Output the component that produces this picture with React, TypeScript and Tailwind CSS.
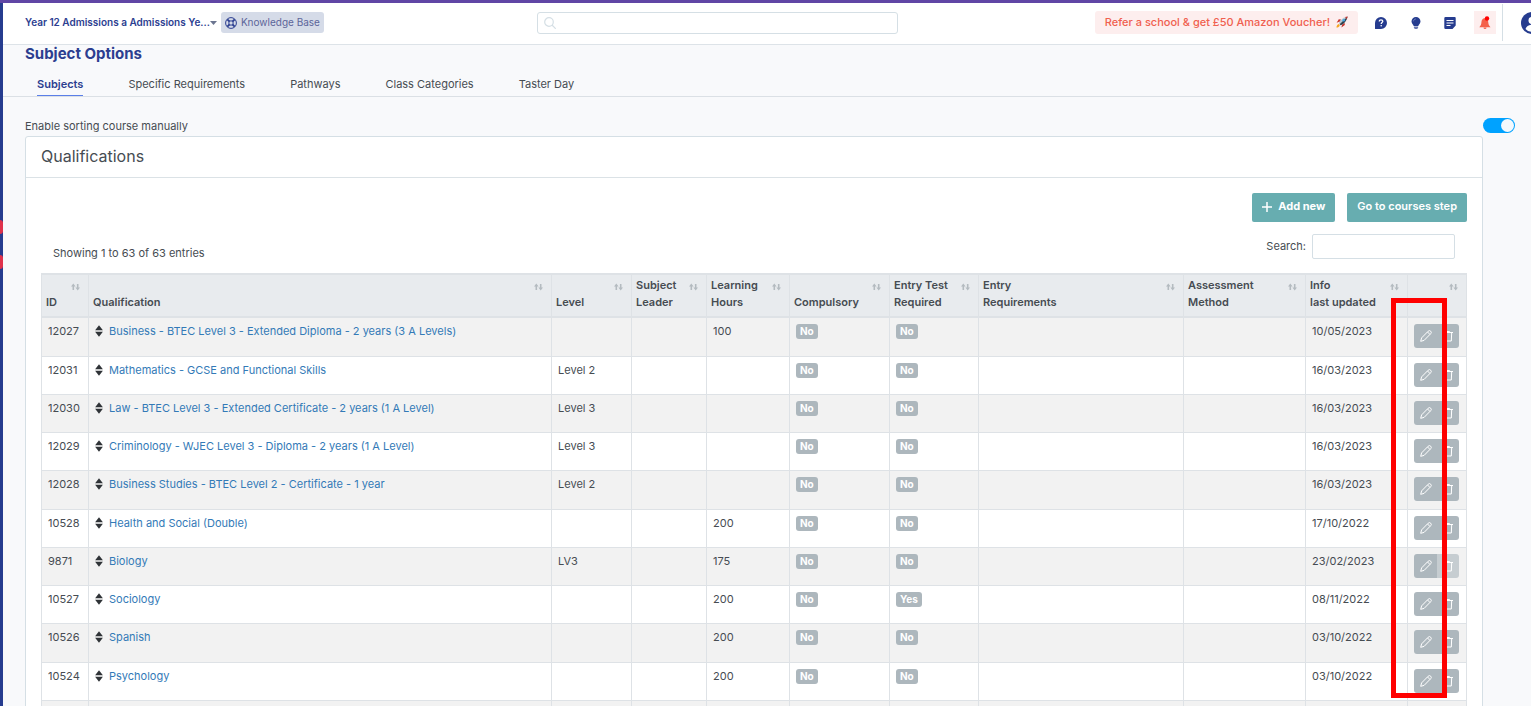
import type { ReactNode } from "react";
import clsx from "clsx";

type Qualification = {
  id: string;
  name: string;
  level?: string;
  hours?: string;
  entryTest?: boolean;
  updated: string;
  locked?: boolean;
};

const qualifications: Qualification[] = [
  { id: "12027", name: "Business - BTEC Level 3 - Extended Diploma - 2 years (3 A Levels)", hours: "100", updated: "10/05/2023" },
  { id: "12031", name: "Mathematics - GCSE and Functional Skills", level: "Level 2", updated: "16/03/2023" },
  { id: "12030", name: "Law - BTEC Level 3 - Extended Certificate - 2 years (1 A Level)", level: "Level 3", updated: "16/03/2023" },
  { id: "12029", name: "Criminology - WJEC Level 3 - Diploma - 2 years (1 A Level)", level: "Level 3", updated: "16/03/2023" },
  { id: "12028", name: "Business Studies - BTEC Level 2 - Certificate - 1 year", level: "Level 2", updated: "16/03/2023" },
  { id: "10528", name: "Health and Social (Double)", hours: "200", updated: "17/10/2022" },
  { id: "9871", name: "Biology", level: "LV3", hours: "175", updated: "23/02/2023", locked: true },
  { id: "10527", name: "Sociology", hours: "200", entryTest: true, updated: "08/11/2022" },
  { id: "10526", name: "Spanish", hours: "200", updated: "03/10/2022" },
  { id: "10524", name: "Psychology", hours: "200", updated: "03/10/2022" },
];

const columns = [
  { lines: ["ID"], width: "w-[47px]" },
  { lines: ["Qualification"], width: "" },
  { lines: ["Level"], width: "w-[80px]" },
  { lines: ["Subject", "Leader"], width: "w-[75px]" },
  { lines: ["Learning", "Hours"], width: "w-[83px]" },
  { lines: ["Compulsory"], width: "w-[100px]" },
  { lines: ["Entry Test", "Required"], width: "w-[89px]" },
  { lines: ["Entry", "Requirements"], width: "w-[205px]" },
  { lines: ["Assessment", "Method"], width: "w-[122px]" },
  { lines: ["Info", "last updated"], width: "w-[102px]" },
  { lines: [], width: "w-[59px]" },
];

const tabs = ["Subjects", "Specific Requirements", "Pathways", "Class Categories", "Taster Day"];

function SortIcon() {
  return (
    <svg viewBox="0 0 9 8" className="h-2 w-[9px]" fill="#b4bbc0">
      <path d="M2.300.5 4.600 3.500H3.100V7H1.500V3.500H0z" />
      <path d="M6.700 7.500 4.400 4.500H5.900V1h1.600v3.500H9z" />
    </svg>
  );
}

function DragIcon() {
  return (
    <svg viewBox="0 0 8 12" className="h-3 w-2 shrink-0" fill="#2f3337">
      <path d="M4 .3 7.900 5.200H.1z" />
      <path d="M4 11.700 7.900 6.800H.1z" />
    </svg>
  );
}

function PlusIcon() {
  return (
    <svg viewBox="0 0 10 10" className="size-[10px]" fill="none" stroke="#fff" strokeWidth="1.500">
      <path d="M5 0v10M0 5h10" />
    </svg>
  );
}

function PencilIcon() {
  return (
    <svg viewBox="0 0 12 12" className="size-3" fill="none" stroke="#fff" strokeLinejoin="round">
      <path d="M.7 11.300 1.600 7.900 8.200 1.200a1.700 1.700 0 0 1 2.500 2.500L4.100 10.400z" />
      <path d="m7.500 2 2.400 2.400M9.400 2.600l.1-.1" />
    </svg>
  );
}

function TrashIcon() {
  return (
    <svg viewBox="0 0 12 12" className="size-3" fill="none" stroke="#fff">
      <path d="M1.500 2.500h9.500M4.500 2.500v-1h3v1M2.700 2.500l.3 8.500h6.300l.4-8.500" />
    </svg>
  );
}

function LifeRingIcon() {
  return (
    <svg viewBox="0 0 12 12" className="size-3" fill="none" stroke="#2c3e90">
      <circle cx="6" cy="6" r="5.400" />
      <circle cx="6" cy="6" r="2.200" />
      <path d="m2.300 2.300 2.200 2.200M9.700 2.300 7.500 4.500M2.300 9.700l2.200-2.200M9.700 9.700 7.500 7.500" strokeWidth="1.800" />
    </svg>
  );
}

function RocketIcon() {
  return (
    <svg viewBox="0 0 12 12" className="size-3">
      <path d="M4 5.600.6 6.800l2.200-3.600L5 3.400zM6.300 8l-.9 3.400 3.400-2.400-.1-2z" fill="#c8352d" />
      <path d="M.4 11.600c.2-1.800.9-3.100 2.400-3.500l1 1.100c-.4 1.500-1.600 2.200-3.400 2.400z" fill="#f5a623" />
      <path d="M2.800 7.300C4.300 3.900 7 1.300 11.600.4c-.9 4.600-3.500 7.300-6.900 8.800z" fill="#b7c6d0" />
      <path d="M4.700 9.200C8.100 7.700 10.700 5 11.600.4L3.700 8.200z" fill="#33424d" />
      <path d="M9 1.100 11.600.4l-.7 2.600z" fill="#c8352d" />
      <circle cx="7.700" cy="4.300" r="1.200" fill="#3fa9e8" />
    </svg>
  );
}

function HelpIcon() {
  return (
    <svg viewBox="0 0 12 12" className="size-3">
      <path d="M6 0a6 6 0 1 1 0 12H.6a.6.6 0 0 1-.6-.6V6a6 6 0 0 1 6-6z" fill="#263c8f" />
      <path d="M4.300 4.600C4.300 3.400 5 2.800 6 2.800s1.800.6 1.800 1.500C7.800 5.500 6.200 5.600 6.200 7" fill="none" stroke="#fff" strokeWidth="1.300" />
      <circle cx="6.200" cy="8.800" r=".8" fill="#fff" />
    </svg>
  );
}

function BulbIcon() {
  return (
    <svg viewBox="0 0 10 12" className="h-3 w-[10px]" fill="#263c8f">
      <path d="M5 0a4.500 4.500 0 0 1 4.500 4.400C9.500 6.400 7.600 7.200 7.300 9H2.700C2.400 7.200.5 6.400.5 4.400A4.500 4.500 0 0 1 5 0z" />
      <path d="M2.900 9.500h4.200v1.300L6.200 12H3.800l-.9-1.200z" opacity=".7" />
      <path d="M2.500 4.300C2.600 3 3.500 2 4.900 1.900" fill="none" stroke="#7d8bc0" strokeWidth=".8" />
    </svg>
  );
}

function NoteIcon() {
  return (
    <svg viewBox="0 0 12 12" className="size-3">
      <path d="M1.500 0h9.300a.9.900 0 0 1 .9.900V8.500L8.500 12h-7A1.200 1.200 0 0 1 .3 10.800V1.200A1.200 1.200 0 0 1 1.500 0z" fill="#263c8f" />
      <path d="M2.500 3.500h7M2.500 6h7M2.500 8.500h4" stroke="#fff" />
    </svg>
  );
}

function BellIcon() {
  return (
    <svg viewBox="0 0 12 14" className="h-[14px] w-3">
      <path d="M5.600 2.300C8 2.300 9.200 4 9.300 6.500c.1 2 .7 3 2.200 4.700H.3c1.500-1.700 2-2.700 2.100-4.700C2.500 4 3.600 2.300 5.600 2.300z" fill="#f4614b" />
      <path d="M4.500 11.600h3a1.500 1.500 0 0 1-3 0z" fill="#f4614b" />
      <circle cx="8" cy="2.500" r="2.200" fill="#f00" />
    </svg>
  );
}

function AvatarIcon() {
  return (
    <svg viewBox="0 0 22 22" className="size-[22px]">
      <circle cx="11" cy="11" r="11" fill="#263c8f" />
      <circle cx="11" cy="8.500" r="3.500" fill="#fff" />
      <path d="M4.500 17c1-3 3.500-4.200 6.500-4.200s5.500 1.200 6.500 4.200a9 9 0 0 1-13 0z" fill="#fff" />
    </svg>
  );
}

function YesNo({ value }: { value?: boolean }) {
  return (
    <span className="inline-block rounded-[3px] bg-[#adb7bd] px-1 text-[10px] leading-[15px] font-bold text-white">
      {value ? "Yes" : "No"}
    </span>
  );
}

function Cell({ children, className }: { children?: ReactNode; className?: string }) {
  return (
    <td className={clsx("border-r border-b border-[#dee2e6] px-[6px] align-top leading-[17px]", className ?? "pt-[5px]")}>
      {children}
    </td>
  );
}

function Header() {
  return (
    <header className="flex h-[42px] items-center border-b border-[#dde3e8] bg-white pb-[2px] pl-[22px]">
      <div className="flex w-[34%] items-center">
        <button className="flex items-center text-[10px] font-semibold text-[#2c3e90]">
          Year 12 Admissions a Admissions Ye...
          <svg viewBox="0 0 7 4" className="h-1 w-[7px]" fill="#6b7590">
            <path d="M0 0h7L3.500 4z" />
          </svg>
        </button>
        <a href="#" className="ml-1 flex h-[21px] items-center gap-1 rounded-[3px] bg-[#d5dbe8] px-1 text-[10px] text-[#5c659a]">
          <LifeRingIcon />
          Knowledge Base
        </a>
      </div>

      <label className="flex h-[22px] w-[361px] items-center rounded-[3px] border border-[#d5dfe5] px-[6px]">
        <svg viewBox="0 0 12 12" className="size-3" fill="none" stroke="#d5dfe5" strokeWidth="1.200">
          <circle cx="5" cy="5" r="4.300" />
          <path d="m8 8 3.800 3.800" />
        </svg>
        <input aria-label="Search" className="min-w-0 flex-1 outline-none" />
      </label>

      <div className="flex flex-1 items-center justify-end">
        <a href="#" className="flex h-[23px] items-center gap-[6px] rounded-[3px] bg-[#fdeeee] px-[10px] pb-px text-[11px] font-medium text-[#f0604f]">
          Refer a school &amp; get £50 Amazon Voucher!
          <RocketIcon />
        </a>
        <button aria-label="Help" className="ml-[17px]"><HelpIcon /></button>
        <button aria-label="Tips" className="ml-6"><BulbIcon /></button>
        <button aria-label="Notes" className="ml-[23px]"><NoteIcon /></button>
        <button aria-label="Notifications" className="ml-[18px] flex h-[23px] w-[22px] items-center justify-center bg-[#fdeeee]">
          <BellIcon />
        </button>
        <div className="ml-[6px] flex h-[37px] w-[29px] items-center overflow-hidden border-l border-[#d5dfe5] pl-[18px]">
          <button aria-label="Account" className="shrink-0"><AvatarIcon /></button>
        </div>
      </div>
    </header>
  );
}

function QualificationsTable() {
  return (
    <div className="relative mt-[11px]">
      <table className="w-full table-fixed border-separate border-spacing-0 border-l border-[#dee2e6]">
        <thead>
          <tr className="h-[45px] bg-[#e8ebee]">
            {columns.map(({ lines, width }, i) => (
              <th
                key={i}
                className={clsx("border-y-2 border-r border-[#dee2e6] px-1 pb-[5px] text-left align-bottom font-semibold text-[#464c52]", width)}
              >
                <div className="flex h-[34px] justify-between leading-[17px]">
                  <span className="self-end whitespace-nowrap">
                    {lines.map((line) => (
                      <span key={line} className="block">{line}</span>
                    ))}
                  </span>
                  <button aria-label="Sort" className="mt-[6px] mr-1 self-start"><SortIcon /></button>
                </div>
              </th>
            ))}
          </tr>
        </thead>
        <tbody>
          {qualifications.map((q) => (
            <tr key={q.id} className="h-[38px] odd:bg-[#f2f2f2] nth-[4n+1]:h-[39px]">
              <Cell>{q.id}</Cell>
              <Cell>
                <div className="flex items-start gap-[6px]">
                  <span className="pt-[2px]"><DragIcon /></span>
                  <a href="#" className="text-[#337ab7]">{q.name}</a>
                </div>
              </Cell>
              <Cell>{q.level}</Cell>
              <Cell />
              <Cell>{q.hours}</Cell>
              <Cell><YesNo /></Cell>
              <Cell><YesNo value={q.entryTest} /></Cell>
              <Cell />
              <Cell />
              <Cell>{q.updated}</Cell>
              <Cell className="pt-[6px]">
                <div className="flex h-6 w-[45px] overflow-hidden rounded-[3px]">
                  <button aria-label="Edit" className="flex w-[23px] items-center justify-center bg-[#adb7bd]"><PencilIcon /></button>
                  <button
                    aria-label="Delete"
                    disabled={q.locked}
                    className="flex w-[22px] items-center justify-center bg-[#adb7bd] disabled:bg-[#c6cdd1]"
                  >
                    <TrashIcon />
                  </button>
                </div>
              </Cell>
            </tr>
          ))}
          <tr className="h-[38px] odd:bg-[#f2f2f2]">
            {columns.map((_, i) => (
              <Cell key={i} />
            ))}
          </tr>
        </tbody>
      </table>
      {/* highlight around the edit buttons */}
      <div className="pointer-events-none absolute top-[25px] right-5 h-[400px] w-14 border-5 border-[#f00]" />
    </div>
  );
}

export default function App() {
  return (
    <div className="flex h-screen flex-col overflow-hidden border-t-3 border-[#6046a5] bg-[#f8f9fb] font-['Inter',sans-serif] text-[11px] text-[#464c52]">
      <div className="flex min-h-0 flex-1">
        <aside className="flex w-[3px] shrink-0 flex-col gap-[21px] bg-[#263c8f] pt-[217px]">
          <span className="h-[14px] rounded-r-[3px] bg-[#e0324b]" />
          <span className="h-[14px] rounded-r-[3px] bg-[#e0324b]" />
        </aside>

        <div className="min-w-0 flex-1">
          <Header />

          <h1 className="px-[22px] text-[15px] leading-[18px] font-bold text-[#2c3e90]">Subject Options</h1>
          <nav className="mt-[13px] flex gap-[45px] border-b border-[#dbe0e5] px-[34px]">
            {tabs.map((tab, i) => (
              <a
                key={tab}
                href="#"
                className={clsx("h-5 border-b leading-[17px]", i === 0 ? "border-[#5b7fe8] font-semibold text-[#2c3e90]" : "border-transparent")}
              >
                {tab}
              </a>
            ))}
          </nav>

          <main className="pr-4 pl-[22px]">
            <label className="mt-[21px] flex items-start justify-between leading-[17px]">
              Enable sorting course manually
              <span className="relative flex">
                <input type="checkbox" defaultChecked className="h-[15px] w-8 appearance-none rounded-full bg-[#c6cdd1] checked:bg-[#00a2ff]" />
                <span className="pointer-events-none absolute top-px right-px size-[13px] rounded-full bg-[#f4f9fd]" />
              </span>
            </label>

            <section className="mt-px mr-8 rounded-t-[3px] border border-[#d5dfe5] bg-white">
              <h2 className="h-[41px] border-b border-[#dbe2e6] px-[15px] text-base leading-[38px]">Qualifications</h2>
              <div className="px-[15px] pt-[15px]">
                <div className="flex justify-end gap-3 font-semibold text-white">
                  <button className="flex h-[29px] items-center gap-[6px] rounded-[2px] bg-[#67adb0] px-[10px] pb-[2px] font-bold">
                    <PlusIcon />
                    Add new
                  </button>
                  <button className="h-[29px] rounded-[2px] bg-[#67adb0] px-[10px] pb-[2px]">Go to courses step</button>
                </div>
                <div className="mt-3 flex items-start justify-between px-3">
                  <p className="mt-[11px] leading-[17px]">Showing 1 to 63 of 63 entries</p>
                  <label className="flex items-center gap-[6px]">
                    Search:
                    <input type="search" className="h-[25px] w-[143px] rounded-[2px] border border-[#d5dfe5] px-2 outline-none" />
                  </label>
                </div>
                <QualificationsTable />
              </div>
            </section>
          </main>
        </div>
      </div>
    </div>
  );
}
